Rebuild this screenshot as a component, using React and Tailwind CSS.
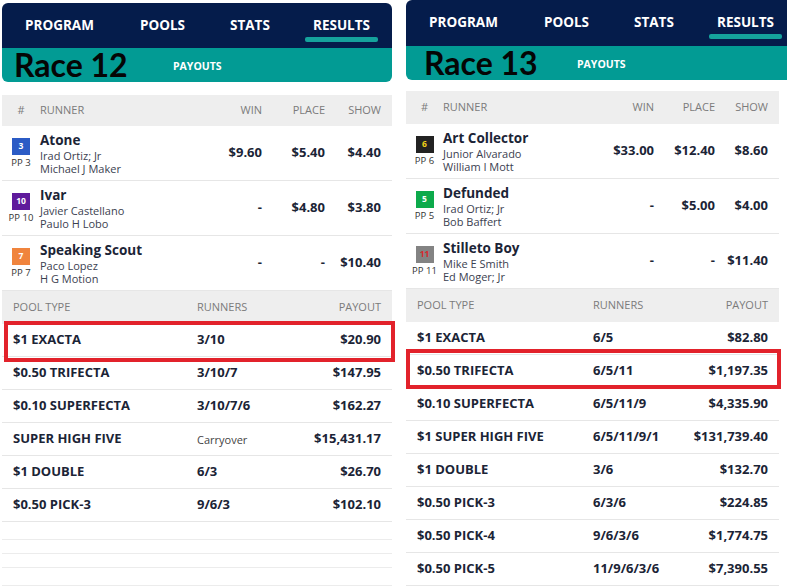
import React from 'react';

const races = [
  {
    name: 'Race 12',
    wrap: 'ml-[2px] mt-[3px] w-[390px]',
    nav: 'h-[45px] rounded-t-md',
    band: 'rounded-b-md',
    raceW: 'w-[171px] pl-[12px]',
    table: 'w-[390px] mt-[13px]',
    headH: 'h-[31px]',
    runnerCols: 'grid-cols-[38px_1fr_63px_63px_56px]',
    poolCols: 'grid-cols-[184px_1fr_auto]',
    highlight: 0,
    box: '-top-[3px] -bottom-[6px] left-[2px] -right-[3px]',
    fillers: ['h-[18px]', 'h-[14px]', 'h-[14px]', 'h-[18px]'],
    runners: [
      { num: '3', pp: 'PP 3', color: 'bg-[#2b5bc5] text-white', name: 'Atone', jockey: 'Irad Ortiz; Jr', trainer: 'Michael J Maker', win: '$9.60', place: '$5.40', show: '$4.40' },
      { num: '10', pp: 'PP 10', color: 'bg-[#5f1a9c] text-white', name: 'Ivar', jockey: 'Javier Castellano', trainer: 'Paulo H Lobo', win: '-', place: '$4.80', show: '$3.80' },
      { num: '7', pp: 'PP 7', color: 'bg-[#f0843d] text-white', name: 'Speaking Scout', jockey: 'Paco Lopez', trainer: 'H G Motion', win: '-', place: '-', show: '$10.40' },
    ],
    pools: [
      ['$1 EXACTA', '3/10', '$20.90'],
      ['$0.50 TRIFECTA', '3/10/7', '$147.95'],
      ['$0.10 SUPERFECTA', '3/10/7/6', '$162.27'],
      ['SUPER HIGH FIVE', 'Carryover', '$15,431.17'],
      ['$1 DOUBLE', '6/3', '$26.70'],
      ['$0.50 PICK-3', '9/6/3', '$102.10'],
    ],
  },
  {
    name: 'Race 13',
    wrap: 'ml-[14px] w-[381px]',
    nav: 'h-[46px] rounded-tl-md',
    band: 'rounded-bl-md',
    raceW: 'w-[171px] pl-[18px]',
    table: 'w-[373px] mt-[11px]',
    headH: 'h-[33px]',
    runnerCols: 'grid-cols-[37px_1fr_61px_61px_53px]',
    poolCols: 'grid-cols-[176px_1fr_auto]',
    highlight: 1,
    box: '-top-[6px] -bottom-[2px] left-0 -right-[2px]',
    fillers: [],
    runners: [
      { num: '6', pp: 'PP 6', color: 'bg-[#222222] text-[#f2d218]', name: 'Art Collector', jockey: 'Junior Alvarado', trainer: 'William I Mott', win: '$33.00', place: '$12.40', show: '$8.60' },
      { num: '5', pp: 'PP 5', color: 'bg-[#0daa4b] text-white', name: 'Defunded', jockey: 'Irad Ortiz; Jr', trainer: 'Bob Baffert', win: '-', place: '$5.00', show: '$4.00' },
      { num: '11', pp: 'PP 11', color: 'bg-[#838383] text-[#d8262b]', name: 'Stilleto Boy', jockey: 'Mike E Smith', trainer: 'Ed Moger; Jr', win: '-', place: '-', show: '$11.40' },
    ],
    pools: [
      ['$1 EXACTA', '6/5', '$82.80'],
      ['$0.50 TRIFECTA', '6/5/11', '$1,197.35'],
      ['$0.10 SUPERFECTA', '6/5/11/9', '$4,335.90'],
      ['$1 SUPER HIGH FIVE', '6/5/11/9/1', '$131,739.40'],
      ['$1 DOUBLE', '3/6', '$132.70'],
      ['$0.50 PICK-3', '6/3/6', '$224.85'],
      ['$0.50 PICK-4', '9/6/3/6', '$1,774.75'],
      ['$0.50 PICK-5', '11/9/6/3/6', '$7,390.55'],
    ],
  },
];

const NavBar = ({ race }) => (
  <div className={`flex bg-[#051c4b] pl-[23px] text-[13.5px] font-bold text-white ${race.nav}`}>
    <div className="w-[115px] pt-[13px] leading-[18px]">PROGRAM</div>
    <div className="w-[90px] pt-[13px] leading-[18px]">POOLS</div>
    <div className="w-[83px] pt-[13px] leading-[18px]">STATS</div>
    <div className="-ml-[8px] flex flex-col items-stretch pt-[13px]">
      <span className="px-[8px] leading-[18px]">RESULTS</span>
      <span className="mt-[3px] h-[5px] rounded-[2px] bg-[#15a29c]" />
    </div>
  </div>
);

const RunnerRow = ({ r, cols }) => (
  <div className={`grid ${cols} h-[55px] border-b border-[#e6e6e6] pr-[11px] text-[#1b2436]`}>
    <div className="flex flex-col items-center pt-[12px]">
      <div className={`flex h-[17px] w-[18px] items-center justify-center text-[8.5px] font-bold ${r.color}`}>{r.num}</div>
      <div className="mt-[2px] text-[9.5px] leading-[12px] text-[#333]">{r.pp}</div>
    </div>
    <div className="pt-[6px]">
      <div className="text-[13.5px] font-bold leading-[16px]">{r.name}</div>
      <div className="mt-[1px] text-[11px] leading-[13px] text-[#3b4150]">{r.jockey}</div>
      <div className="text-[11px] leading-[13px] text-[#3b4150]">{r.trainer}</div>
    </div>
    <div className="flex items-center justify-end text-[13px] font-bold">{r.win}</div>
    <div className="flex items-center justify-end text-[13px] font-bold">{r.place}</div>
    <div className="flex items-center justify-end text-[13px] font-bold">{r.show}</div>
  </div>
);

const PoolRow = ({ p, cols, highlighted, box }) => (
  <div className={`relative grid ${cols} h-[33px] items-center border-b border-[#e6e6e6] pl-[11px] pr-[11px] text-[13px] font-bold text-[#1b2436]`}>
    <span>{p[0]}</span>
    {p[1] === 'Carryover' ? (
      <span className="pt-[3px] text-[11px] font-normal text-[#444]">{p[1]}</span>
    ) : (
      <span>{p[1]}</span>
    )}
    <span className="text-right">{p[2]}</span>
    {highlighted && <div className={`pointer-events-none absolute border-[4px] border-[#e2222b] ${box}`} />}
  </div>
);

const RacePanel = ({ race }) => (
  <div className={race.wrap}>
    <NavBar race={race} />
    <div className={`flex h-[34px] items-center bg-[#029b94] ${race.band}`}>
      <span className={`${race.raceW} font-['Lato',sans-serif] text-[32px] font-bold leading-[34px] text-[#050505]`}>{race.name}</span>
      <span className="pt-[3px] text-[10.5px] font-bold text-white">PAYOUTS</span>
    </div>

    <div className={race.table}>
      <div className={`grid ${race.runnerCols} ${race.headH} items-center bg-[#eeeeee] pr-[11px] text-[11px] text-[#7b7b7b]`}>
        <span className="text-center">#</span>
        <span>RUNNER</span>
        <span className="text-right">WIN</span>
        <span className="text-right">PLACE</span>
        <span className="text-right">SHOW</span>
      </div>
      {race.runners.map((r) => (
        <RunnerRow key={r.num} r={r} cols={race.runnerCols} />
      ))}

      <div className={`grid ${race.poolCols} h-[33px] items-center bg-[#eeeeee] px-[11px] text-[11px] text-[#7b7b7b]`}>
        <span>POOL TYPE</span>
        <span>RUNNERS</span>
        <span className="text-right">PAYOUT</span>
      </div>
      {race.pools.map((p, i) => (
        <PoolRow key={p[0]} p={p} cols={race.poolCols} highlighted={i === race.highlight} box={race.box} />
      ))}
      {race.fillers.map((h, i) => (
        <div key={i} className={`${h} border-b border-[#ececec]`} />
      ))}
    </div>
  </div>
);

export default function App() {
  return (
    <div className="flex h-[586px] w-[787px] overflow-hidden bg-white font-['Open_Sans',sans-serif]">
      {races.map((race) => (
        <RacePanel key={race.name} race={race} />
      ))}
    </div>
  );
}
